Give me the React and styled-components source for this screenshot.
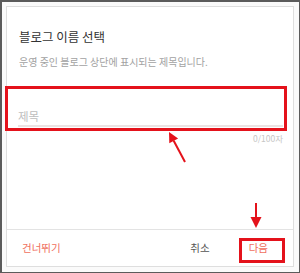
import React from "react";
import styled, { createGlobalStyle } from "styled-components";

const Global = createGlobalStyle`
  html, body { margin: 0; padding: 0; background: #fff; }
  body { font-family: "Noto Sans CJK KR", "Noto Sans", sans-serif; }
  * { box-sizing: border-box; }
`;

const RED = "#e4121b";

const Page = styled.div`
  position: relative;
  width: 300px;
  height: 273px;
  border-style: solid;
  border-color: #5b5b5b;
  border-width: 2px 1px 1px 2px;
  background: #fafafa;
  padding: 4px 5px 5px 4px;
  display: flex;
`;

const Card = styled.div`
  flex: 1;
  background: #fff;
  border: 1px solid #dedede;
  display: flex;
  flex-direction: column;
`;

const Header = styled.div`
  padding: 22px 12px 0 12px;
  display: flex;
  flex-direction: column;
`;

const Title = styled.div`
  font-size: 12.5px;
  line-height: 16px;
  color: #333;
`;

const Subtitle = styled.div`
  margin-top: 11px;
  font-size: 10px;
  line-height: 12px;
  color: #a2a2a2;
  white-space: nowrap;
`;

const Field = styled.div`
  margin-top: 35px;
  padding: 0 10px 0 11px;
  display: flex;
  flex-direction: column;
`;

const InputRow = styled.div`
  height: 24px;
  border-bottom: 2px solid #ebe3e3;
  display: flex;
  align-items: center;
  font-size: 11.5px;
  color: #bdbdbd;
  padding-top: 4px;
`;

const Counter = styled.div`
  margin-top: 5px;
  align-self: flex-end;
  font-size: 8.5px;
  line-height: 12px;
  color: #c6c6c6;
`;

const Spacer = styled.div`
  flex: 1;
`;

const Footer = styled.div`
  height: 37px;
  border-top: 1px solid #e3e3e3;
  display: flex;
  align-items: center;
  padding: 0 25px 0 15px;
  font-size: 10.5px;
`;

const FooterButton = styled.span`
  color: ${(p) => (p.$accent ? "#f0705e" : "#555")};
  margin-left: ${(p) => p.$gap || 0}px;
  line-height: 14px;
`;

const Highlight = styled.div`
  position: absolute;
  left: ${(p) => p.$x}px;
  top: ${(p) => p.$y}px;
  width: ${(p) => p.$w}px;
  height: ${(p) => p.$h}px;
  border: 3px solid ${RED};
  pointer-events: none;
`;

const Overlay = styled.svg`
  position: absolute;
  left: -2px;
  top: -2px;
  pointer-events: none;
`;

export default function App() {
  return (
    <>
      <Global />
      <Page>
        <Card>
          <Header>
            <Title>블로그 이름 선택</Title>
            <Subtitle>운영 중인 블로그 상단에 표시되는 제목입니다.</Subtitle>
          </Header>
          <Field>
            <InputRow>제목</InputRow>
            <Counter>0/100자</Counter>
          </Field>
          <Spacer />
          <Footer>
            <FooterButton $accent>건너뛰기</FooterButton>
            <Spacer />
            <FooterButton>취소</FooterButton>
            <FooterButton $accent $gap={39}>다음</FooterButton>
          </Footer>
        </Card>
        <Highlight $x={3} $y={84} $w={282} $h={45} />
        <Highlight $x={237} $y={236} $w={46} $h={25} />
        <Overlay width="300" height="273" viewBox="0 0 300 273">
          <line x1="185" y1="162" x2="173.7" y2="140.8" stroke={RED} strokeWidth="2" />
          <polygon points="169,132 178.1,138.4 169.3,143.2" fill={RED} />
          <line x1="256" y1="203" x2="256" y2="218" stroke={RED} strokeWidth="2" />
          <polygon points="256,228 250.5,217 261.5,217" fill={RED} />
        </Overlay>
      </Page>
    </>
  );
}
